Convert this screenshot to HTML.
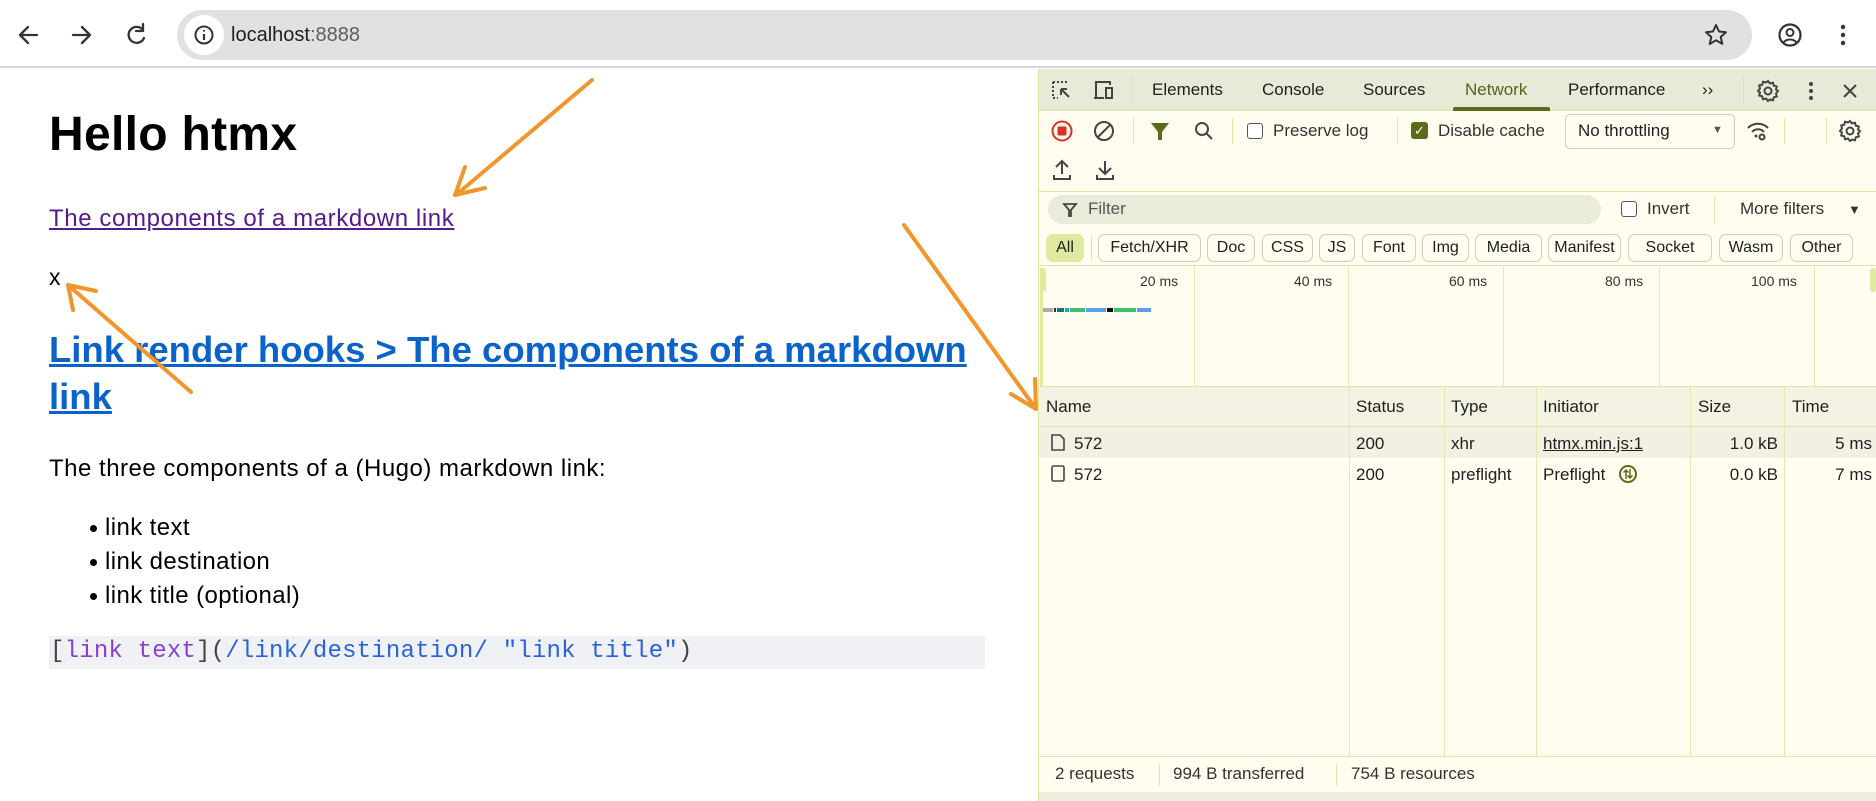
<!DOCTYPE html>
<html><head><meta charset="utf-8">
<style>
*{box-sizing:border-box;margin:0;padding:0}
body{width:1876px;height:801px;overflow:hidden;background:#fff;font-family:"Liberation Sans",sans-serif;position:relative;color:#1f1f1f}
.a{position:absolute;white-space:nowrap}
.dt{font-size:17px;color:#1f1f1f}
.sep{position:absolute;width:1px;background:#dbe6a8}
.chip{position:absolute;top:234px;height:28px;border:1px solid #cfcfbf;border-radius:7px;font-size:16px;line-height:26px;text-align:center;color:#1f1f1f;background:#fefdf0}
.cb{position:absolute;width:16px;height:16px;border:1.5px solid #555;border-radius:3px;background:#fff}
.vl{position:absolute;width:1px;background:#e0ebb0}
.li{position:relative;padding-left:15px}
.li:before{content:"";position:absolute;left:0;top:14px;width:7px;height:7px;border-radius:50%;background:#000}
</style></head><body>
<!-- browser toolbar -->
<div class="a" style="left:0;top:0;width:1876px;height:68px;background:#fff;border-bottom:2px solid #d6d6d6"></div>
<svg class="a" style="left:0;top:0" width="180" height="68">
<g stroke="#333" stroke-width="2.3" fill="none" stroke-linecap="round" stroke-linejoin="round">
<path d="M37 35H21M28 27l-8 8 8 8"/>
<path d="M73 35h16M82 27l8 8-8 8"/>
<path d="M143 30a8 8 0 1 0 1 8M143 24v7h-7"/>
</g></svg>
<div class="a" style="left:177px;top:10px;width:1575px;height:50px;background:#e1e1e1;border-radius:25px"></div>
<div class="a" style="left:184px;top:15px;width:40px;height:40px;background:#fff;border-radius:20px"></div>
<svg class="a" style="left:192px;top:23px" width="24" height="24"><circle cx="12" cy="12" r="8.5" stroke="#333" stroke-width="2" fill="none"/><path d="M12 11v6M12 7v1.5" stroke="#333" stroke-width="2.2"/></svg>
<div class="a" style="left:231px;top:24px;font-size:20px;color:#1f1f1f">localhost<span style="color:#5f5f5f">:8888</span></div>
<svg class="a" style="left:1702px;top:21px" width="28" height="28"><path d="M14 4l3 6.5 7 .7-5.3 4.7 1.6 7L14 19.3 7.7 23l1.6-7L4 11.2l7-.7z" fill="none" stroke="#333" stroke-width="2" stroke-linejoin="round"/></svg>
<svg class="a" style="left:1776px;top:21px" width="28" height="28"><circle cx="14" cy="14" r="10.5" fill="none" stroke="#333" stroke-width="2.2"/><circle cx="14" cy="11.5" r="3.5" fill="none" stroke="#333" stroke-width="2"/><path d="M7.5 21.5c3-4 10-4 13 0" fill="none" stroke="#333" stroke-width="2"/></svg>
<svg class="a" style="left:1835px;top:21px" width="16" height="28"><circle cx="8" cy="6" r="2.2" fill="#333"/><circle cx="8" cy="14" r="2.2" fill="#333"/><circle cx="8" cy="22" r="2.2" fill="#333"/></svg>

<!-- page -->
<div class="a" style="left:49px;top:107px;font-size:48px;font-weight:bold;color:#000;letter-spacing:0.3px">Hello htmx</div>
<div class="a" style="left:49px;top:205px;font-size:24px;color:#551a8b;text-decoration:underline;letter-spacing:0.6px">The components of a markdown link</div>
<div class="a" style="left:49px;top:264px;font-size:23px;color:#000">x</div>
<div class="a" style="left:49px;top:326px;width:990px;font-size:36.5px;font-weight:bold;color:#0b63c9;text-decoration:underline;line-height:47px;white-space:normal">Link render hooks &gt; The components of a markdown<br>link</div>
<div class="a" style="left:49px;top:455px;font-size:24px;color:#000;letter-spacing:0.5px">The three components of a (Hugo) markdown link:</div>
<div class="a" style="left:90px;top:511px;font-size:24px;color:#000;line-height:34px;letter-spacing:0.4px">
<div class="li">link text</div><div class="li">link destination</div><div class="li">link title (optional)</div></div>
<div class="a" style="left:49px;top:636px;width:936px;height:33px;background:#f0f1f4"></div>
<div class="a" style="left:50px;top:638px;font-family:'Liberation Mono',monospace;font-size:24px;color:#444;letter-spacing:0.2px">[<span style="color:#8a3ed6">link text</span>](<span style="color:#2a62d9">/link/destination/ "link title"</span>)</div>

<!-- devtools -->
<div class="a" style="left:1038px;top:69px;width:838px;height:732px;background:#fefdf0;border-left:1px solid #dbe6a8"></div>
<div class="a" style="left:1039px;top:69px;width:837px;height:42px;background:#e9e9d7;border-bottom:1px solid #dbe6a8"></div>
<svg class="a" style="left:1050px;top:78px" width="80" height="26"><g fill="none" stroke="#444" stroke-width="2"><path d="M3 4h16M3 4v16M3 20h5" stroke-dasharray="2 2"/><path d="M11 11l8 8M11 11v6M11 11h6"/><path d="M46 20V4h14v3M44 20h10M56 10h6v10h-6z"/></g></svg>
<div class="sep" style="left:1131px;top:76px;height:28px"></div>
<div class="a dt" style="left:1152px;top:80px">Elements</div>
<div class="a dt" style="left:1262px;top:80px">Console</div>
<div class="a dt" style="left:1363px;top:80px">Sources</div>
<div class="a dt" style="left:1465px;top:80px;color:#54661a">Network</div>
<div class="a" style="left:1453px;top:107px;width:97px;height:4px;background:#5a6b1c;border-radius:2px 2px 0 0"></div>
<div class="a dt" style="left:1568px;top:80px">Performance</div>
<div class="a dt" style="left:1702px;top:80px">››</div>
<div class="sep" style="left:1743px;top:76px;height:28px"></div>
<svg class="a" style="left:1756px;top:78px" width="120" height="26"><g fill="none" stroke="#444" stroke-width="2"><circle cx="12" cy="13" r="3.5"/><path d="M12 3l2 2.5 3-.8.8 3 3 .8-.8 3L22 13l-2 2.5.8 3-3 .8-.8 3-3-.8L12 23l-2-2.5-3 .8-.8-3-3-.8.8-3L2 13l2-2.5-.8-3 3-.8.8-3 3 .8z"/><path d="M88 7l12 12M100 7L88 19"/></g><circle cx="55" cy="6" r="2" fill="#444"/><circle cx="55" cy="13" r="2" fill="#444"/><circle cx="55" cy="20" r="2" fill="#444"/></svg>

<!-- row1 -->
<svg class="a" style="left:1050px;top:118px" width="170" height="26"><circle cx="12" cy="13" r="9.5" fill="none" stroke="#d93025" stroke-width="2"/><rect x="7.5" y="8.5" width="9" height="9" rx="1.5" fill="#d93025"/><g fill="none" stroke="#444" stroke-width="2"><circle cx="54" cy="13" r="9"/><path d="M48 19l12-12"/><circle cx="152" cy="11" r="6"/><path d="M156 15l6 6"/></g><path d="M101 5h18l-7 9v8h-4v-8z" fill="#5b6b1a"/></svg>
<div class="sep" style="left:1133px;top:118px;height:26px"></div>
<div class="sep" style="left:1232px;top:118px;height:26px"></div>
<div class="cb" style="left:1247px;top:123px"></div>
<div class="a dt" style="left:1273px;top:121px;color:#333">Preserve log</div>
<div class="sep" style="left:1397px;top:118px;height:26px"></div>
<div class="a" style="left:1411px;top:122px;width:17px;height:17px;background:#5b6b1a;border-radius:3px;color:#fff;font-size:13px;line-height:17px;text-align:center">✓</div>
<div class="a dt" style="left:1438px;top:121px;color:#333">Disable cache</div>
<div class="a" style="left:1565px;top:114px;width:170px;height:35px;border:1px solid #ccc;border-radius:5px;background:#fefdf0"></div>
<div class="a dt" style="left:1578px;top:121px">No throttling</div>
<div class="a" style="left:1712px;top:124px;font-size:11px;color:#555">▼</div>
<svg class="a" style="left:1745px;top:118px" width="26" height="26"><g fill="none" stroke="#444" stroke-width="2"><path d="M3 10a14 14 0 0 1 20 0M7 14a8 8 0 0 1 12 0"/><circle cx="17" cy="19" r="2.5"/></g><circle cx="11" cy="18" r="1.5" fill="#444"/></svg>
<div class="sep" style="left:1784px;top:118px;height:26px"></div>
<div class="sep" style="left:1826px;top:118px;height:26px"></div>
<svg class="a" style="left:1838px;top:118px" width="26" height="26"><g fill="none" stroke="#444" stroke-width="2"><circle cx="12" cy="13" r="3.5"/><path d="M12 3l2 2.5 3-.8.8 3 3 .8-.8 3L22 13l-2 2.5.8 3-3 .8-.8 3-3-.8L12 23l-2-2.5-3 .8-.8-3-3-.8.8-3L2 13l2-2.5-.8-3 3-.8.8-3 3 .8z"/></g></svg>
<!-- row2 -->
<svg class="a" style="left:1050px;top:157px" width="70" height="26"><g fill="none" stroke="#444" stroke-width="2"><path d="M12 17V4M6 10l6-6 6 6M4 18v4h16v-4"/><path d="M55 4v13M49 11l6 6 6-6M47 18v4h16v-4"/></g></svg>
<div class="a" style="left:1039px;top:191px;width:837px;height:1px;background:#dbe6a8"></div>
<!-- filter row -->
<div class="a" style="left:1048px;top:195px;width:553px;height:29px;background:#ebebd9;border-radius:15px"></div>
<svg class="a" style="left:1062px;top:201px" width="16" height="18"><path d="M2 3h12l-5 6v6H7V9z" fill="none" stroke="#444" stroke-width="1.8"/></svg>
<div class="a dt" style="left:1088px;top:199px;color:#555">Filter</div>
<div class="cb" style="left:1621px;top:201px"></div>
<div class="a dt" style="left:1647px;top:199px;color:#333">Invert</div>
<div class="sep" style="left:1714px;top:197px;height:26px"></div>
<div class="a dt" style="left:1740px;top:199px;color:#333">More filters</div>
<div class="a" style="left:1848px;top:202px;font-size:13px;color:#333">▼</div>
<div class="chip" style="left:1046px;width:38px;background:#dfe9a0;border-color:#dfe9a0">All</div>
<div class="sep" style="left:1091px;top:236px;height:24px"></div>
<div class="chip" style="left:1098px;width:103px">Fetch/XHR</div>
<div class="chip" style="left:1207px;width:48px">Doc</div>
<div class="chip" style="left:1262px;width:51px">CSS</div>
<div class="chip" style="left:1319px;width:36px">JS</div>
<div class="chip" style="left:1362px;width:54px">Font</div>
<div class="chip" style="left:1422px;width:47px">Img</div>
<div class="chip" style="left:1475px;width:67px">Media</div>
<div class="chip" style="left:1548px;width:73px">Manifest</div>
<div class="chip" style="left:1628px;width:84px">Socket</div>
<div class="chip" style="left:1719px;width:64px">Wasm</div>
<div class="chip" style="left:1790px;width:63px">Other</div>
<!-- overview -->
<div class="a" style="left:1039px;top:265px;width:837px;height:1px;background:#dbe6a8"></div>
<div class="a" style="left:1040px;top:268px;width:6px;height:24px;background:#dfe9a0;border-radius:3px"></div>
<div class="a" style="left:1040px;top:268px;width:3px;height:118px;background:#dfe9a0"></div>
<div class="a" style="left:1870px;top:268px;width:6px;height:24px;background:#dfe9a0;border-radius:3px"></div>
<div class="vl" style="left:1194px;top:266px;height:120px"></div>
<div class="vl" style="left:1348px;top:266px;height:120px"></div>
<div class="vl" style="left:1503px;top:266px;height:120px"></div>
<div class="vl" style="left:1659px;top:266px;height:120px"></div>
<div class="vl" style="left:1814px;top:266px;height:120px"></div>
<div class="a" style="left:1140px;top:273px;font-size:14px;color:#333">20 ms</div>
<div class="a" style="left:1294px;top:273px;font-size:14px;color:#333">40 ms</div>
<div class="a" style="left:1449px;top:273px;font-size:14px;color:#333">60 ms</div>
<div class="a" style="left:1605px;top:273px;font-size:14px;color:#333">80 ms</div>
<div class="a" style="left:1751px;top:273px;font-size:14px;color:#333">100 ms</div>
<svg class="a" style="left:1043px;top:308px" width="120" height="5"><rect x="0" y="0" width="10" height="4" fill="#aaa"/><rect x="11" y="0" width="2" height="4" fill="#333"/><rect x="14" y="0" width="7" height="4" fill="#1a6e8a"/><rect x="22" y="0" width="4" height="4" fill="#2aa"/><rect x="27" y="0" width="15" height="4" fill="#3bc06b"/><rect x="43" y="0" width="20" height="4" fill="#5a9cf0"/><rect x="64" y="0" width="6" height="4" fill="#111"/><rect x="71" y="0" width="22" height="4" fill="#3bc06b"/><rect x="94" y="0" width="14" height="4" fill="#5a9cf0"/></svg>
<!-- table -->
<div class="a" style="left:1039px;top:386px;width:837px;height:41px;background:#f3f2e3;border-top:1px solid #dbe6a8;border-bottom:1px solid #dbe6a8"></div>
<div class="a" style="left:1039px;top:427px;width:837px;height:31px;background:#f1f0e2"></div>
<div class="vl" style="left:1349px;top:387px;height:369px"></div>
<div class="vl" style="left:1444px;top:387px;height:369px"></div>
<div class="vl" style="left:1536px;top:387px;height:369px"></div>
<div class="vl" style="left:1690px;top:387px;height:369px"></div>
<div class="vl" style="left:1784px;top:387px;height:369px"></div>
<div class="a dt" style="left:1046px;top:397px">Name</div>
<div class="a dt" style="left:1356px;top:397px">Status</div>
<div class="a dt" style="left:1451px;top:397px">Type</div>
<div class="a dt" style="left:1543px;top:397px">Initiator</div>
<div class="a dt" style="left:1698px;top:397px">Size</div>
<div class="a dt" style="left:1792px;top:397px">Time</div>
<svg class="a" style="left:1049px;top:433px" width="18" height="50"><path d="M3 2h8l4 4v11H3z" fill="none" stroke="#444" stroke-width="1.6"/><rect x="3" y="33" width="12" height="15" rx="1.5" fill="none" stroke="#444" stroke-width="1.6"/></svg>
<div class="a dt" style="left:1074px;top:434px">572</div>
<div class="a dt" style="left:1356px;top:434px">200</div>
<div class="a dt" style="left:1451px;top:434px">xhr</div>
<div class="a dt" style="left:1543px;top:434px;text-decoration:underline">htmx.min.js:1</div>
<div class="a dt" style="left:1700px;top:434px;width:78px;text-align:right">1.0 kB</div>
<div class="a dt" style="left:1790px;top:434px;width:82px;text-align:right">5 ms</div>
<div class="a dt" style="left:1074px;top:465px">572</div>
<div class="a dt" style="left:1356px;top:465px">200</div>
<div class="a dt" style="left:1451px;top:465px">preflight</div>
<div class="a dt" style="left:1543px;top:465px">Preflight</div>
<svg class="a" style="left:1618px;top:464px" width="20" height="20"><circle cx="10" cy="10" r="8" fill="none" stroke="#5b6b1a" stroke-width="2"/><path d="M8 15V6M5.5 8.5 8 6l2.5 2.5M12 5v9M9.5 11.5 12 14l2.5-2.5" fill="none" stroke="#5b6b1a" stroke-width="1.5"/></svg>
<div class="a dt" style="left:1700px;top:465px;width:78px;text-align:right">0.0 kB</div>
<div class="a dt" style="left:1790px;top:465px;width:82px;text-align:right">7 ms</div>
<!-- footer -->
<div class="a" style="left:1039px;top:756px;width:837px;height:36px;border-top:1px solid #dbe6a8;background:#fefdf0"></div>
<div class="a" style="left:1039px;top:792px;width:837px;height:9px;background:#eeeedd"></div>
<div class="a" style="left:1055px;top:764px;font-size:17px;color:#333">2 requests</div>
<div class="sep" style="left:1159px;top:764px;height:22px"></div>
<div class="a" style="left:1173px;top:764px;font-size:17px;color:#333">994 B transferred</div>
<div class="sep" style="left:1336px;top:764px;height:22px"></div>
<div class="a" style="left:1351px;top:764px;font-size:17px;color:#333">754 B resources</div>

<!-- arrows -->
<svg class="a" style="left:0;top:0" width="1876" height="801"><g stroke="#f0962c" stroke-width="4" fill="none" stroke-linecap="round">
<path d="M592 80L456 195M455 195l10-28M455 195l30-7"/>
<path d="M191 392L68 285M68 285l28 6M68 285l5 25"/>
<path d="M904 225L1036 409M1036 409l-25-15M1036 409l-1-30"/>
</g></svg>
</body></html>
